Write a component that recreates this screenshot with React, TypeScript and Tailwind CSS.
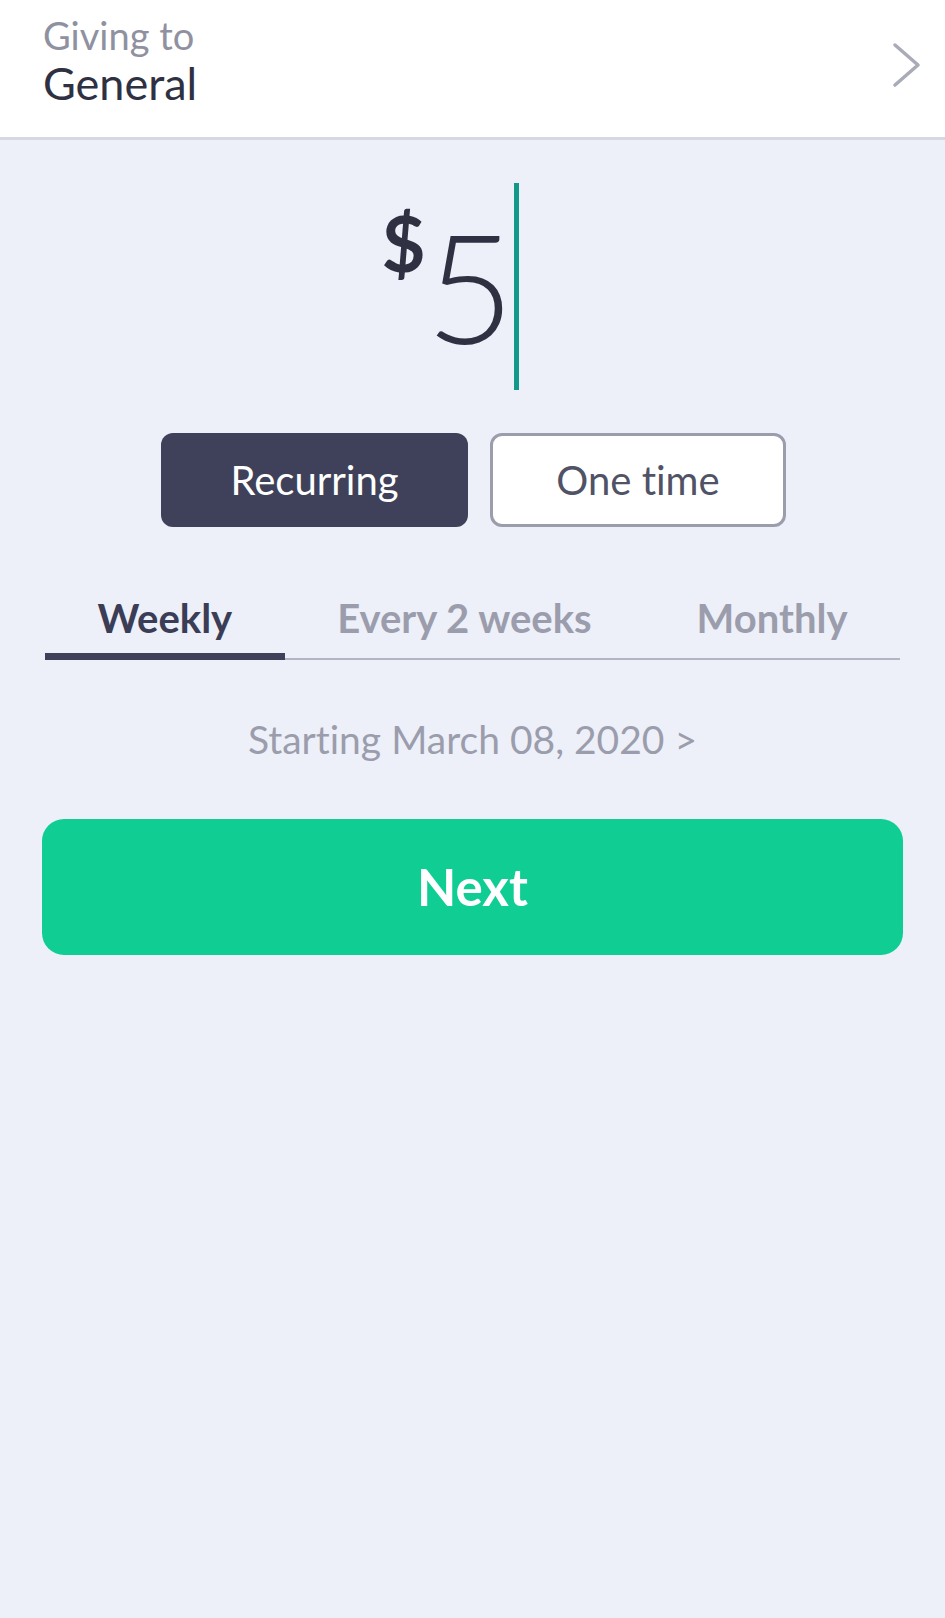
import React from "react";

export default function App() {
  const font = { fontFamily: "Lato, 'Noto Sans', sans-serif" };
  return (
    <div className="min-h-[1618px] w-[945px] bg-[#edf0f8] [font-variant-ligatures:none]" style={font}>
      {/* Header */}
      <div className="relative flex h-[140px] flex-col border-b-[3px] border-[#d5d8e2] bg-white pl-[43px] pt-[13px]">
        <div className="text-[38px] leading-[45px] text-[#8f91a0]">Giving to</div>
        <div className="text-[45px] leading-[50px] text-[#2f3142]">General</div>
        <svg
          className="absolute right-[22px] top-[41px]"
          width="32"
          height="48"
          viewBox="0 0 32 48"
          fill="none"
        >
          <path d="M4 4 L27 24 L4 44" stroke="#a9abb7" strokeWidth="3.5" strokeLinecap="round" strokeLinejoin="round" />
        </svg>
      </div>

      {/* Amount */}
      <div className="mt-[43px] flex h-[207px] items-start justify-center pr-[44px]">
        <div className="mt-[22px] text-[76px] font-bold leading-[76px] text-[#2f3142]">$</div>
        <div className="mt-[26px] text-[153px] font-light leading-[153px] text-[#2f3142]">5</div>
        <div className="h-[207px] w-[5px] bg-[#13998a]" />
      </div>

      {/* Recurring / One time */}
      <div className="mt-[43px] flex justify-center gap-[22px] pl-[2px]">
        <div className="flex h-[94px] w-[307px] items-center justify-center rounded-[12px] bg-[#3e4159] text-[40px] text-white">
          Recurring
        </div>
        <div className="flex h-[94px] w-[296px] items-center justify-center rounded-[12px] border-[3px] border-[#9b9dad] bg-white text-[40px] text-[#505266]">
          One time
        </div>
      </div>

      {/* Tabs */}
      <div className="mx-[45px] mt-[67px] flex">
        <div className="flex flex-auto flex-col">
          <div className="text-center text-[40px] font-bold leading-[49px] text-[#3a3d55]">Weekly</div>
          <div className="mt-[10px] h-[7px] bg-[#3e4159]" />
        </div>
        <div className="flex flex-auto flex-col">
          <div className="text-center text-[40px] font-bold leading-[49px] text-[#9b9dad]">Every 2 weeks</div>
          <div className="mt-[10px] flex h-[7px] items-end">
            <div className="h-[2px] w-full bg-[#b3b5c3]" />
          </div>
        </div>
        <div className="flex flex-auto flex-col">
          <div className="text-center text-[40px] font-bold leading-[49px] text-[#9b9dad]">Monthly</div>
          <div className="mt-[10px] flex h-[7px] items-end">
            <div className="h-[2px] w-full bg-[#b3b5c3]" />
          </div>
        </div>
      </div>

      {/* Starting date */}
      <div className="mt-[56px] text-center text-[39px] leading-[46px] text-[#9b9dad]">
        Starting March 08, 2020 &gt;
      </div>

      {/* Next */}
      <div className="mx-[42px] mt-[57px] flex h-[136px] items-center justify-center rounded-[22px] bg-[#10cd94] text-[51px] font-bold text-white">
        Next
      </div>
    </div>
  );
}
